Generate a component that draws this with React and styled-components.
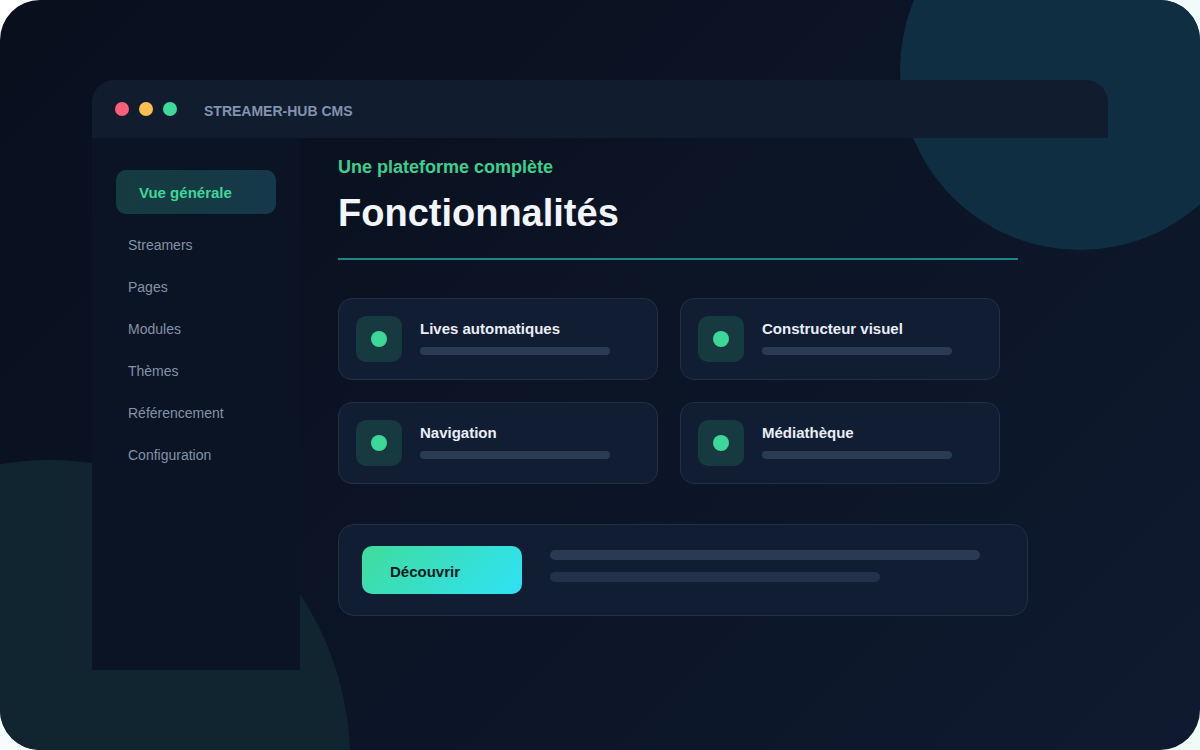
import React from "react";
import styled, { createGlobalStyle } from "styled-components";

const GlobalStyle = createGlobalStyle`
  html, body {
    margin: 0;
    padding: 0;
  }
  body {
    background: linear-gradient(135deg, #ffffff 0%, #f2fbfd 50%, #effbf7 100%);
    font-family: "Liberation Sans", Arial, sans-serif;
  }
`;

const Frame = styled.div`
  position: relative;
  width: 1200px;
  height: 750px;
  border-radius: 40px;
  overflow: hidden;
  background: linear-gradient(135deg, #080f1d 0%, #0c1526 55%, #0f1a30 100%);
`;

const Blob = styled.div`
  position: absolute;
  border-radius: 50%;
  width: ${(p) => p.size}px;
  height: ${(p) => p.size}px;
  left: ${(p) => p.x}px;
  top: ${(p) => p.y}px;
  background: ${(p) => p.color};
`;

const Window = styled.div`
  position: relative;
  margin: 80px 0 0 92px;
  width: 1016px;
  display: flex;
  flex-direction: column;
`;

const TitleBar = styled.div`
  height: 58px;
  background: #111c2f;
  border-radius: 22px 22px 0 0;
  display: flex;
  align-items: center;
  padding-left: 23px;
`;

const Dot = styled.span`
  width: 14px;
  height: 14px;
  border-radius: 50%;
  background: ${(p) => p.color};
  margin-right: 10px;
`;

const AppTitle = styled.span`
  margin-left: 17px;
  margin-top: 4px;
  font-size: 14px;
  font-weight: 700;
  color: #8193b0;
`;

const Body = styled.div`
  display: flex;
`;

const Sidebar = styled.nav`
  width: 208px;
  height: 532px;
  box-sizing: border-box;
  background: #0b1424;
  padding: 32px 24px;
  display: flex;
  flex-direction: column;
`;

const ActiveItem = styled.div`
  height: 44px;
  border-radius: 10px;
  background: linear-gradient(90deg, #163b3f 0%, #15394a 100%);
  color: #3fd69a;
  font-size: 15px;
  font-weight: 700;
  display: flex;
  align-items: center;
  padding-left: 23px;
  margin-bottom: 10px;
`;

const NavItem = styled.div`
  height: 42px;
  display: flex;
  align-items: center;
  padding-left: 12px;
  font-size: 14px;
  color: #8492a8;
`;

const Main = styled.main`
  flex: 1;
  padding: 18px 0 0 38px;
  display: flex;
  flex-direction: column;
  align-items: flex-start;
`;

const Eyebrow = styled.div`
  font-size: 18px;
  line-height: 22px;
  font-weight: 700;
  color: #3ecf8e;
`;

const Heading = styled.h1`
  margin: 12px 0 0;
  font-size: 38px;
  line-height: 46px;
  font-weight: 700;
  color: #f1f5fc;
`;

const Divider = styled.div`
  margin-top: 22px;
  width: 680px;
  height: 2px;
  background: #1d8585;
`;

const Grid = styled.div`
  margin-top: 38px;
  display: grid;
  grid-template-columns: 320px 320px;
  gap: 22px;
`;

const Card = styled.div`
  height: 82px;
  box-sizing: border-box;
  background: #111d33;
  border: 1px solid #232f47;
  border-radius: 14px;
  padding: 17px;
  display: flex;
  align-items: flex-start;
  gap: 18px;
`;

const IconBox = styled.div`
  width: 46px;
  height: 46px;
  border-radius: 10px;
  background: #173a40;
  display: flex;
  align-items: center;
  justify-content: center;
  flex-shrink: 0;
`;

const IconDot = styled.span`
  width: 16px;
  height: 16px;
  border-radius: 50%;
  background: #3fd69a;
`;

const CardText = styled.div`
  padding-top: 2px;
  display: flex;
  flex-direction: column;
`;

const CardTitle = styled.div`
  font-size: 15px;
  line-height: 22px;
  font-weight: 700;
  color: #e9eef8;
`;

const Bar = styled.div`
  margin-top: ${(p) => p.mt || 0}px;
  width: ${(p) => p.w}px;
  height: ${(p) => p.h}px;
  border-radius: ${(p) => p.h / 2}px;
  background: ${(p) => p.color || "#2a3a53"};
`;

const Cta = styled.div`
  margin-top: 40px;
  width: 690px;
  height: 92px;
  box-sizing: border-box;
  background: #111d33;
  border: 1px solid #232f47;
  border-radius: 16px;
  padding: 21px 23px;
  display: flex;
  align-items: flex-start;
  gap: 28px;
`;

const CtaButton = styled.button`
  width: 160px;
  height: 48px;
  border: none;
  border-radius: 10px;
  background: linear-gradient(135deg, #40dc9c 0%, #2ee2f6 100%);
  color: #0a1a22;
  font-family: "Liberation Sans", Arial, sans-serif;
  font-size: 15px;
  font-weight: 700;
  text-align: left;
  padding: 2px 0 0 28px;
  cursor: pointer;
`;

const CtaLines = styled.div`
  padding-top: 4px;
  display: flex;
  flex-direction: column;
`;

const features = [
  "Lives automatiques",
  "Constructeur visuel",
  "Navigation",
  "Médiathèque",
];

const navItems = [
  "Streamers",
  "Pages",
  "Modules",
  "Thèmes",
  "Référencement",
  "Configuration",
];

export default function App() {
  return (
    <>
      <GlobalStyle />
      <Frame>
        <Blob size={360} x={900} y={-110} color="#0f2e42" />
        <Blob size={600} x={-250} y={460} color="#10252f" />
        <Window>
          <TitleBar>
            <Dot color="#fb5f78" />
            <Dot color="#fbbf4f" />
            <Dot color="#3fd99a" />
            <AppTitle>STREAMER-HUB CMS</AppTitle>
          </TitleBar>
          <Body>
            <Sidebar>
              <ActiveItem>Vue générale</ActiveItem>
              {navItems.map((item) => (
                <NavItem key={item}>{item}</NavItem>
              ))}
            </Sidebar>
            <Main>
              <Eyebrow>Une plateforme complète</Eyebrow>
              <Heading>Fonctionnalités</Heading>
              <Divider />
              <Grid>
                {features.map((f) => (
                  <Card key={f}>
                    <IconBox>
                      <IconDot />
                    </IconBox>
                    <CardText>
                      <CardTitle>{f}</CardTitle>
                      <Bar mt={7} w={190} h={8} />
                    </CardText>
                  </Card>
                ))}
              </Grid>
              <Cta>
                <CtaButton>Découvrir</CtaButton>
                <CtaLines>
                  <Bar w={430} h={10} color="#2a3a53" />
                  <Bar mt={12} w={330} h={10} color="#23314a" />
                </CtaLines>
              </Cta>
            </Main>
          </Body>
        </Window>
      </Frame>
    </>
  );
}
